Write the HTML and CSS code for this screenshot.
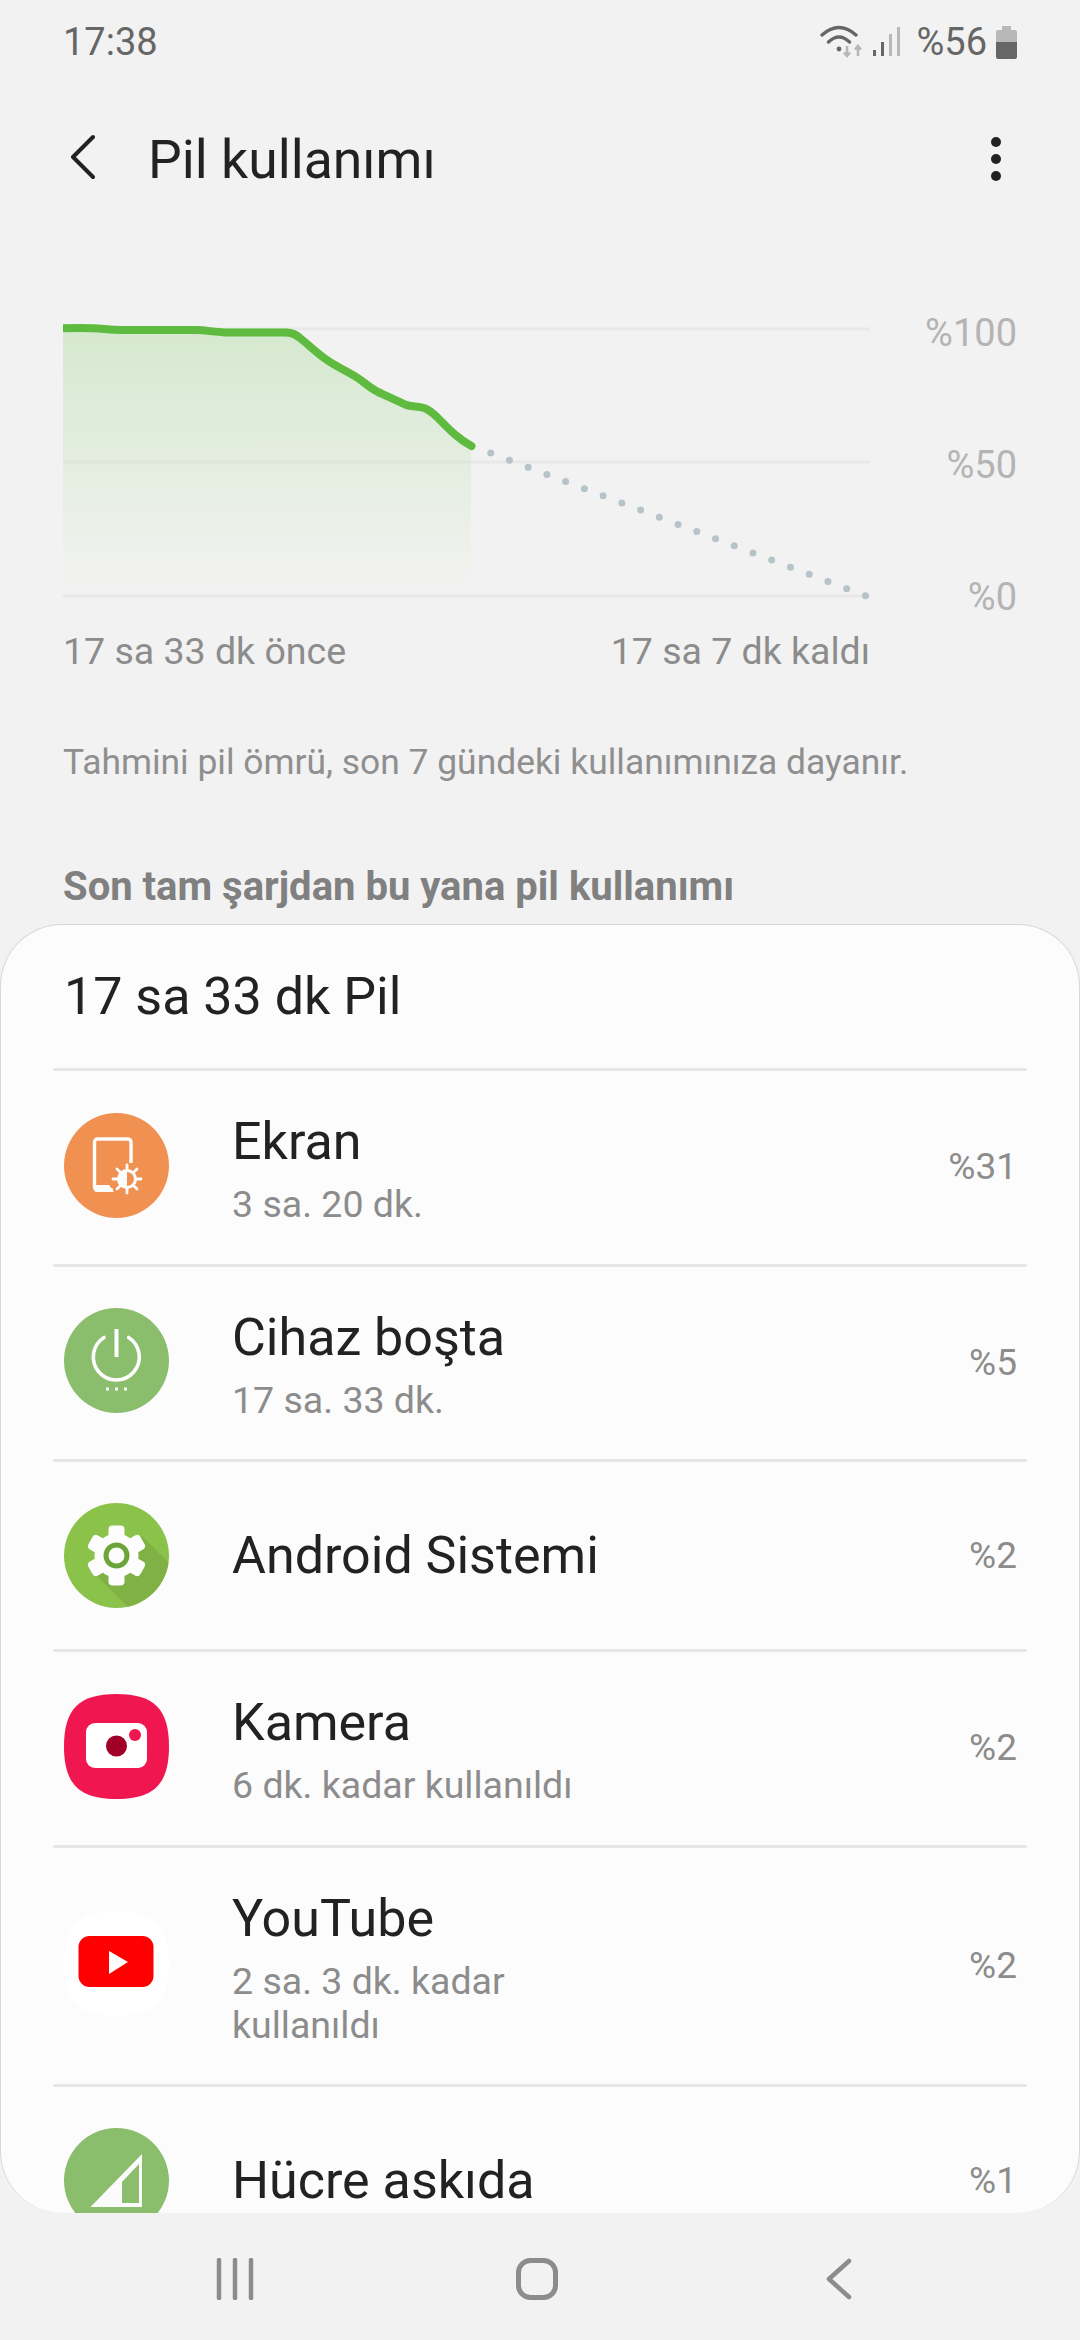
FILE: index.html
```html
<!DOCTYPE html>
<html lang="tr">
<head>
    <meta charset="UTF-8">
    <meta name="viewport" content="width=device-width, initial-scale=1.0">
    <title>Pil kullanımı</title>
    <link rel="stylesheet" href="styles.css">
</head>
<body>
    <div class="status">
        <span class="clock">17:38</span>
        <div class="status-right">
            <svg class="wifi" width="44" height="34" viewBox="0 0 44 34">
                <path d="M2 10 Q19 -5 36 10" fill="none" stroke="#666" stroke-width="3.4" stroke-linecap="round"/>
                <path d="M8.5 17 Q19 7 29.5 17" fill="none" stroke="#666" stroke-width="3.4" stroke-linecap="round"/>
                <circle cx="19" cy="24" r="2.4" fill="#666"/>
                <path d="M27 21 V31 M24 27.5 L27 31 L30 27.5" fill="none" stroke="#b8b8b8" stroke-width="2.6"/>
                <path d="M38 31 V21 M35 24.5 L38 21 L41 24.5" fill="none" stroke="#b8b8b8" stroke-width="2.6"/>
            </svg>
            <svg class="signal" width="28" height="30" viewBox="0 0 28 30">
                <rect x="0" y="23" width="3" height="6" fill="#666"/>
                <rect x="8" y="15" width="3" height="14" fill="#666"/>
                <rect x="16" y="7" width="3" height="22" fill="#b8b8b8"/>
                <rect x="24" y="0" width="3" height="29" fill="#b8b8b8"/>
            </svg>
            <span class="level">%56</span>
            <svg class="battery" width="21" height="33" viewBox="0 0 21 33">
                <path d="M6 0 H15 V4 H19 a2 2 0 0 1 2 2 V16 H0 V6 a2 2 0 0 1 2-2 H6 Z" fill="#b8b8b8"/>
                <path d="M0 16 H21 V31 a2 2 0 0 1 -2 2 H2 a2 2 0 0 1 -2-2 Z" fill="#666"/>
            </svg>
        </div>
    </div>

    <header class="top">
        <svg class="back" width="26" height="46" viewBox="0 0 26 46">
            <path d="M24 3 L4 23 L24 43" fill="none" stroke="#222" stroke-width="4" stroke-linecap="round" stroke-linejoin="round"/>
        </svg>
        <h1>Pil kullanımı</h1>
        <div class="more"><i></i><i></i><i></i></div>
    </header>

    <section class="usage">
        <div class="chart">
            <svg width="807" height="310" viewBox="63 309 807 310">
                <defs>
                    <linearGradient id="fade" x1="0" y1="0" x2="0" y2="1">
                        <stop offset="0" stop-color="#d5e9cf"/>
                        <stop offset="1" stop-color="#f2f2f0"/>
                    </linearGradient>
                </defs>
                <path d="M63 329 H870 M63 462 H870 M63 596 H870" stroke="#e8e8e8" stroke-width="3" fill="none"/>
                <path d="M63 336 Q63 328 70 328 H288 L298 336 L327 360 L357 377 L377 392 L407 405 L423 407 L437 417 L453 433 L471 446 V586 H63 Z" fill="url(#fade)"/>
                <path d="M471 462 H63" stroke="#dfe6da" stroke-width="3"/>
                <path d="M63 328.3 C75 328 85 328 93 328.3 C105 329 112 330 122 330 L196 330 C208 330.3 212 332 225 332.4 L286 332.6 C293 332.8 296 335 300 338 C310 346 318 354 327 360 C337 367 347 371 357 377.5 C364 382 370 388 378 392 C388 396.5 396 400 405 404.5 C412 407.5 417 405.5 424 408 C430 410 434 414 438 418 C444 424 449 429.5 455 434.5 C460 439 465 442.5 471.5 446" fill="none" stroke="#5fbb3f" stroke-width="8" stroke-linecap="round"/>
                <path d="M490.7 453 L866 596" fill="none" stroke="#b6c4ca" stroke-width="7" stroke-linecap="round" stroke-dasharray="0 20.05"/>
            </svg>
            <div class="axis">
                <span>%100</span>
                <span>%50</span>
                <span>%0</span>
            </div>
        </div>
        <div class="times">
            <span>17 sa 33 dk önce</span>
            <span>17 sa 7 dk kaldı</span>
        </div>
        <p class="note">Tahmini pil ömrü, son 7 gündeki kullanımınıza dayanır.</p>
        <h2 class="since">Son tam şarjdan bu yana pil kullanımı</h2>
    </section>

    <main class="card">
        <div class="card-title">17 sa 33 dk Pil</div>

        <div class="row">
            <svg class="icon" width="105" height="105" viewBox="0 0 105 105">
                <circle cx="52.5" cy="52.5" r="52.5" fill="#f09152"/>
                <path d="M67 50 V29 a3 3 0 0 0 -3-3 H33.5 a3 3 0 0 0 -3 3 V74 a3 3 0 0 0 3 3 H49" fill="none" stroke="#fdfdfd" stroke-width="3.4"/>
                <path d="M30 72 H45 L50 79 H33 a3 3 0 0 1 -3-3 Z" fill="#fdfdfd"/>
                <path d="M63 52 V80 M49 66 H77 M53 56 L73 76 M73 56 L53 76" stroke="#fdfdfd" stroke-width="2.8" stroke-linecap="round"/>
                <circle cx="63" cy="66" r="10" fill="#fdfdfd"/>
                <path d="M63 59 A7 7 0 0 1 63 73 Z" fill="#f09152"/>
            </svg>
            <div class="text">
                <div class="name">Ekran</div>
                <div class="sub">3 sa. 20 dk.</div>
            </div>
            <span class="pct">%31</span>
        </div>

        <div class="row">
            <svg class="icon" width="105" height="105" viewBox="0 0 105 105">
                <circle cx="52.5" cy="52.5" r="52.5" fill="#8abd6c"/>
                <path d="M40 29.5 A23 23 0 1 0 64.6 29.5" fill="none" stroke="#fdfdfd" stroke-width="3.6" stroke-linecap="round"/>
                <path d="M52.5 21 V49" stroke="#fdfdfd" stroke-width="4"/>
                <path d="M42 81 H45 M51 81 H54 M60 81 H63" stroke="#fdfdfd" stroke-width="3"/>
            </svg>
            <div class="text">
                <div class="name">Cihaz boşta</div>
                <div class="sub">17 sa. 33 dk.</div>
            </div>
            <span class="pct">%5</span>
        </div>

        <div class="row row-single">
            <svg class="icon" width="105" height="105" viewBox="0 0 105 105">
                <defs>
                    <clipPath id="disc"><circle cx="52.5" cy="52.5" r="52.5"/></clipPath>
                </defs>
                <circle cx="52.5" cy="52.5" r="52.5" fill="#8bc34a"/>
                <path d="M30 70 L68 108 L110 108 L110 65 L78 33 Z" fill="#7fb145" clip-path="url(#disc)"/>
                <g fill="#fdfdfd">
                    <circle cx="52.5" cy="52.5" r="22"/>
                    <rect x="44.5" y="22.5" width="16" height="60" rx="4"/>
                    <rect x="44.5" y="22.5" width="16" height="60" rx="4" transform="rotate(60 52.5 52.5)"/>
                    <rect x="44.5" y="22.5" width="16" height="60" rx="4" transform="rotate(120 52.5 52.5)"/>
                </g>
                <circle cx="52.5" cy="52.5" r="10.5" fill="#fdfdfd" stroke="#6ba53a" stroke-width="5"/>
            </svg>
            <div class="text">
                <div class="name">Android Sistemi</div>
            </div>
            <span class="pct">%2</span>
        </div>

        <div class="row">
            <svg class="icon" width="105" height="105" viewBox="0 0 105 105">
                <path d="M52.5 0 C90 0 105 15 105 52.5 S90 105 52.5 105 S0 90 0 52.5 S15 0 52.5 0 Z" fill="#f0164f"/>
                <rect x="22" y="29" width="61" height="45" rx="9" fill="#fff"/>
                <circle cx="52.5" cy="52" r="10.5" fill="#a00028"/>
                <circle cx="71" cy="41" r="6" fill="#f0164f"/>
            </svg>
            <div class="text">
                <div class="name">Kamera</div>
                <div class="sub">6 dk. kadar kullanıldı</div>
            </div>
            <span class="pct">%2</span>
        </div>

        <div class="row">
            <svg class="icon" width="105" height="105" viewBox="0 0 105 105">
                <path d="M52.5 0 C90 0 105 15 105 52.5 S90 105 52.5 105 S0 90 0 52.5 S15 0 52.5 0 Z" fill="#fff"/>
                <rect x="14.5" y="25" width="75" height="51" rx="11" fill="#f00"/>
                <path d="M45 40 L64 51 L45 63 Z" fill="#fff"/>
            </svg>
            <div class="text">
                <div class="name">YouTube</div>
                <div class="sub">2 sa. 3 dk. kadar kullanıldı</div>
            </div>
            <span class="pct">%2</span>
        </div>

        <div class="row row-single">
            <svg class="icon" width="105" height="105" viewBox="0 0 105 105">
                <circle cx="52.5" cy="52.5" r="52.5" fill="#8abd6c"/>
                <path d="M26.5 79 L78 26 V79 Z" fill="#fbfbfb"/>
                <path d="M58 54 L75 36 V75 H58 Z" fill="#8abd6c"/>
            </svg>
            <div class="text">
                <div class="name">Hücre askıda</div>
            </div>
            <span class="pct">%1</span>
        </div>
    </main>

    <nav class="bottom">
        <div class="nav-item">
            <svg width="38" height="42" viewBox="0 0 38 42">
                <path d="M3 2 V40 M19 2 V40 M35 2 V40" stroke="#8c8c8c" stroke-width="4.5" stroke-linecap="round"/>
            </svg>
        </div>
        <div class="nav-item">
            <svg width="42" height="42" viewBox="0 0 42 42">
                <rect x="2.5" y="2.5" width="37" height="37" rx="12" fill="none" stroke="#8c8c8c" stroke-width="5"/>
            </svg>
        </div>
        <div class="nav-item">
            <svg width="26" height="42" viewBox="0 0 26 42">
                <path d="M23 3 L3 21 L23 39" fill="none" stroke="#8c8c8c" stroke-width="4.5" stroke-linecap="round" stroke-linejoin="round"/>
            </svg>
        </div>
    </nav>
</body>
</html>
```

FILE: styles.css
```css
* {
    box-sizing: border-box;
}
body {
    font-family: Roboto, "Liberation Sans", sans-serif;
    margin: 0;
    padding: 0;
    width: 1080px;
    height: 2340px;
    overflow: hidden;
    background-color: #f2f2f2;
    display: flex;
    flex-direction: column;
}
.status {
    height: 84px;
    padding: 0 63px;
    display: flex;
    justify-content: space-between;
    align-items: center;
    color: #666;
    font-size: 38px;
}
.status-right {
    display: flex;
    align-items: center;
}
.wifi {
    margin-right: 9px;
}
.signal {
    margin-right: 15px;
}
.level {
    margin-right: 9px;
}
.top {
    height: 148px;
    padding: 2px 70px 0 69px;
    display: flex;
    align-items: center;
}
.back {
    margin-bottom: 5px;
}
.top h1 {
    flex: 1;
    margin: 0 0 0 53px;
    font-size: 53.5px;
    font-weight: 400;
    color: #222;
}
.more {
    width: 20px;
    margin-right: 4px;
    display: flex;
    flex-direction: column;
    align-items: center;
    gap: 7px;
}
.more i {
    width: 10px;
    height: 10px;
    border-radius: 50%;
    background-color: #222;
}
.usage {
    padding: 77px 63px 0;
}
.chart {
    display: flex;
    height: 310px;
}
.chart svg {
    display: block;
    flex: none;
}
.axis {
    flex: 1;
    padding-top: 2px;
    display: flex;
    flex-direction: column;
    justify-content: space-between;
    align-items: flex-end;
    font-size: 38px;
    line-height: 44px;
    color: #b4b4b4;
}
.times {
    width: 807px;
    margin-top: 10px;
    display: flex;
    justify-content: space-between;
    font-size: 37.5px;
    line-height: 44px;
    color: #8c8c8c;
}
.note {
    margin: 67px 0 0;
    font-size: 35.4px;
    line-height: 44px;
    color: #8f8f8f;
}
.since {
    margin: 81px 0 0;
    font-size: 40px;
    line-height: 44px;
    font-weight: 700;
    color: #808080;
}
.card {
    flex: none;
    height: 1289px;
    margin-top: 15px;
    padding: 0 52px;
    overflow: hidden;
    background-color: #fcfcfc;
    border: 1px solid #d8d8d8;
    border-bottom: none;
    border-radius: 62px;
}
.card-title {
    height: 146px;
    padding: 0 11px;
    display: flex;
    align-items: center;
    border-bottom: 3px solid #e6e6e6;
    font-size: 52px;
    color: #222;
}
.row {
    padding: 41px 10px 37.5px 11px;
    display: flex;
    align-items: center;
    border-bottom: 3px solid #e6e6e6;
}
.row-single {
    padding-bottom: 41px;
}
.icon {
    flex: none;
    margin-right: 63px;
    margin-bottom: 8px;
}
.row-single .icon {
    margin-bottom: 0;
}
.text {
    flex: 1;
}
.name {
    font-size: 52px;
    line-height: 60px;
    color: #222;
}
.sub {
    max-width: 380px;
    margin-top: 10px;
    font-size: 37.5px;
    line-height: 44px;
    color: #8c8c8c;
}
.pct {
    margin-bottom: 5px;
    font-size: 37px;
    color: #8c8c8c;
}
.row-single .pct {
    margin-bottom: 0;
}
.bottom {
    flex: 1;
    display: flex;
    justify-content: center;
    align-items: center;
    padding: 5px 6px 0 0;
}
.nav-item {
    width: 302px;
    display: flex;
    justify-content: center;
}
```
